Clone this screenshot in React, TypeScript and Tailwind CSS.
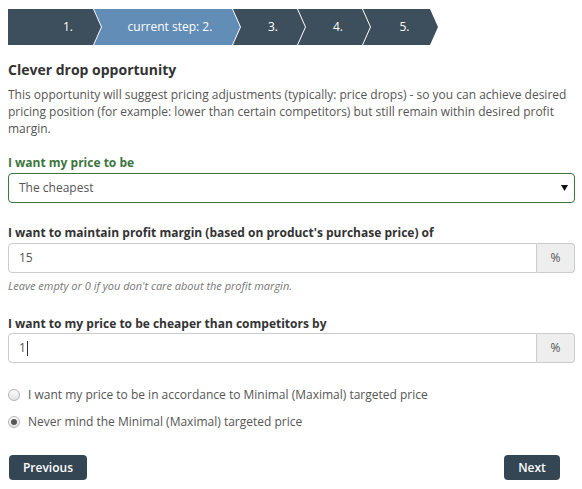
import React from "react";

function Radio({ checked }: { checked?: boolean }) {
  return (
    <span className="flex h-[12px] w-[12px] shrink-0 items-center justify-center rounded-full border border-[#b5b5b5] bg-[linear-gradient(#fbfbfb,#e4e4e4)]">
      {checked && <span className="h-[6px] w-[6px] rounded-full bg-[#555]" />}
    </span>
  );
}

export default function App() {
  return (
    <div className="min-h-[489px] w-[582px] bg-white pt-[9px] font-['Open_Sans',sans-serif] text-[#333]">
      {/* breadcrumb */}
      <div className="flex h-[36px] pl-[8px] text-[12px] text-white">
        <div className="flex w-[93px] items-center justify-center bg-[#3d4e5c] pl-[27px] [clip-path:polygon(0_0,calc(100%_-_8px)_0,100%_50%,calc(100%_-_8px)_100%,0_100%)]">
          1.
        </div>
        <div className="ml-[-7px] flex w-[146px] items-center justify-center bg-[#628db6] pl-[6px] [clip-path:polygon(0_0,calc(100%_-_8px)_0,100%_50%,calc(100%_-_8px)_100%,0_100%,8px_50%)]">
          current step: 2.
        </div>
        <div className="ml-[-7px] flex w-[72px] items-center justify-center bg-[#3d4e5c] pl-[8px] [clip-path:polygon(0_0,calc(100%_-_8px)_0,100%_50%,calc(100%_-_8px)_100%,0_100%,8px_50%)]">
          3.
        </div>
        <div className="ml-[-7px] flex w-[72px] items-center justify-center bg-[#3d4e5c] pl-[8px] [clip-path:polygon(0_0,calc(100%_-_8px)_0,100%_50%,calc(100%_-_8px)_100%,0_100%,8px_50%)]">
          4.
        </div>
        <div className="ml-[-7px] flex w-[75px] items-center justify-center bg-[#3d4e5c] pl-[8px] [clip-path:polygon(0_0,calc(100%_-_8px)_0,100%_50%,calc(100%_-_8px)_100%,0_100%,8px_50%)]">
          5.
        </div>
      </div>

      <div className="pl-[8px] pr-[7px]">
        <h1 className="mt-[15px] text-[14px] font-bold leading-[20px] text-[#333]">
          Clever drop opportunity
        </h1>
        <p className="mt-[6px] text-[12px] leading-[17px] text-[#555]">
          This opportunity will suggest pricing adjustments (typically: price drops) - so you can achieve desired
          pricing position (for example: lower than certain competitors) but still remain within desired profit
          margin.
        </p>

        <div className="mt-[18px] text-[12px] font-bold leading-[16px] text-[#3c763d]">I want my price to be</div>
        <div className="mt-[2px] flex h-[30px] items-center justify-between rounded-[4px] border border-[#3c763d] pl-[10px] pr-[6px] text-[12px] text-[#555]">
          <span>The cheapest</span>
          <svg width="7" height="6" viewBox="0 0 7 6">
            <path d="M0 0 H7 L3.5 6 Z" fill="#111" />
          </svg>
        </div>

        <div className="mt-[22px] text-[12px] font-bold leading-[16px] text-[#333]">
          I want to maintain profit margin (based on product's purchase price) of
        </div>
        <div className="mt-[2px] flex h-[30px] text-[12px] text-[#555]">
          <div className="flex flex-1 items-center rounded-l-[4px] border border-[#ccc] pl-[10px]">15</div>
          <div className="flex w-[38px] items-center justify-center rounded-r-[4px] border border-l-0 border-[#ccc] bg-[#eee]">
            %
          </div>
        </div>
        <div className="mt-[5px] text-[11px] italic leading-[15px] text-[#777]">
          Leave empty or 0 if you don't care about the profit margin.
        </div>

        <div className="mt-[23px] text-[12px] font-bold leading-[16px] text-[#333]">
          I want to my price to be cheaper than competitors by
        </div>
        <div className="mt-[1px] flex h-[30px] text-[12px] text-[#555]">
          <div className="flex flex-1 items-center rounded-l-[4px] border border-[#ccc] pl-[10px]">
            1<span className="ml-[1px] h-[15px] w-px bg-[#333]" />
          </div>
          <div className="flex w-[38px] items-center justify-center rounded-r-[4px] border border-l-0 border-[#ccc] bg-[#eee]">
            %
          </div>
        </div>

        <div className="mt-[24px] flex items-center gap-[8px] text-[12px] leading-[16px] text-[#555]">
          <Radio />
          <span>I want my price to be in accordance to Minimal (Maximal) targeted price</span>
        </div>
        <div className="mt-[11px] flex items-center gap-[8px] text-[12px] leading-[16px] text-[#555]">
          <Radio checked />
          <span>Never mind the Minimal (Maximal) targeted price</span>
        </div>

        <div className="mt-[25px] flex items-center justify-between pl-[1px] pr-[15px]">
          <button className="flex h-[25px] w-[78px] items-center justify-center rounded-[4px] bg-[#344553] text-[12px] font-semibold text-white">
            Previous
          </button>
          <button className="flex h-[25px] w-[56px] items-center justify-center rounded-[4px] bg-[#344553] text-[12px] font-semibold text-white">
            Next
          </button>
        </div>
      </div>
    </div>
  );
}
